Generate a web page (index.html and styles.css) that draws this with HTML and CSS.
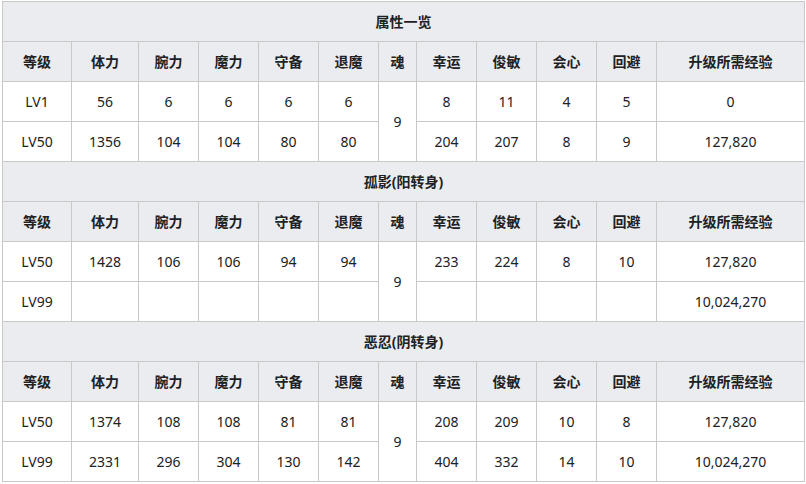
FILE: index.html
```html
<!DOCTYPE html>
<html lang="zh">
<head>
<meta charset="utf-8">
<link rel="stylesheet" href="styles.css">
</head>
<body>
<table class="stats">
  <colgroup>
    <col class="c-lv"><col class="c-hp"><col class="c-n"><col class="c-n"><col class="c-n"><col class="c-n"><col class="c-soul"><col class="c-n"><col class="c-n"><col class="c-n"><col class="c-n"><col class="c-exp">
  </colgroup>
  <tbody>
    <tr><th colspan="12">属性一览</th></tr>
    <tr><th>等级</th><th>体力</th><th>腕力</th><th>魔力</th><th>守备</th><th>退魔</th><th>魂</th><th>幸运</th><th>俊敏</th><th>会心</th><th>回避</th><th>升级所需经验</th></tr>
    <tr><td>LV1</td><td>56</td><td>6</td><td>6</td><td>6</td><td>6</td><td rowspan="2">9</td><td>8</td><td>11</td><td>4</td><td>5</td><td>0</td></tr>
    <tr><td>LV50</td><td>1356</td><td>104</td><td>104</td><td>80</td><td>80</td><td>204</td><td>207</td><td>8</td><td>9</td><td>127,820</td></tr>
    <tr><th colspan="12">孤影(阳转身)</th></tr>
    <tr><th>等级</th><th>体力</th><th>腕力</th><th>魔力</th><th>守备</th><th>退魔</th><th>魂</th><th>幸运</th><th>俊敏</th><th>会心</th><th>回避</th><th>升级所需经验</th></tr>
    <tr><td>LV50</td><td>1428</td><td>106</td><td>106</td><td>94</td><td>94</td><td rowspan="2">9</td><td>233</td><td>224</td><td>8</td><td>10</td><td>127,820</td></tr>
    <tr><td>LV99</td><td></td><td></td><td></td><td></td><td></td><td></td><td></td><td></td><td></td><td>10,024,270</td></tr>
    <tr><th colspan="12">恶忍(阴转身)</th></tr>
    <tr><th>等级</th><th>体力</th><th>腕力</th><th>魔力</th><th>守备</th><th>退魔</th><th>魂</th><th>幸运</th><th>俊敏</th><th>会心</th><th>回避</th><th>升级所需经验</th></tr>
    <tr><td>LV50</td><td>1374</td><td>108</td><td>108</td><td>81</td><td>81</td><td rowspan="2">9</td><td>208</td><td>209</td><td>10</td><td>8</td><td>127,820</td></tr>
    <tr><td>LV99</td><td>2331</td><td>296</td><td>304</td><td>130</td><td>142</td><td>404</td><td>332</td><td>14</td><td>10</td><td>10,024,270</td></tr>
  </tbody>
</table>
</body>
</html>
```

FILE: styles.css
```css
html, body {
  margin: 0;
  padding: 0;
  background: #ffffff;
}

.stats {
  margin: 1px 0 0 2px;
  border-collapse: collapse;
  table-layout: fixed;
  width: 803px;
  font-family: "Noto Sans", "Noto Sans CJK SC", sans-serif;
  font-size: 14px;
  color: #202122;
}

.c-lv { width: 69px; }
.c-hp { width: 67px; }
.c-n { width: 60px; }
.c-soul { width: 38px; }
.c-exp { width: 148px; }

.stats th,
.stats td {
  border: 1px solid #c8c8c8;
  height: 40px;
  padding: 0;
  text-align: center;
  vertical-align: middle;
  box-sizing: border-box;
  line-height: 20px;
}

.stats th {
  background: #eaecf0;
  font-weight: bold;
}

.stats td {
  background: #ffffff;
}
```
